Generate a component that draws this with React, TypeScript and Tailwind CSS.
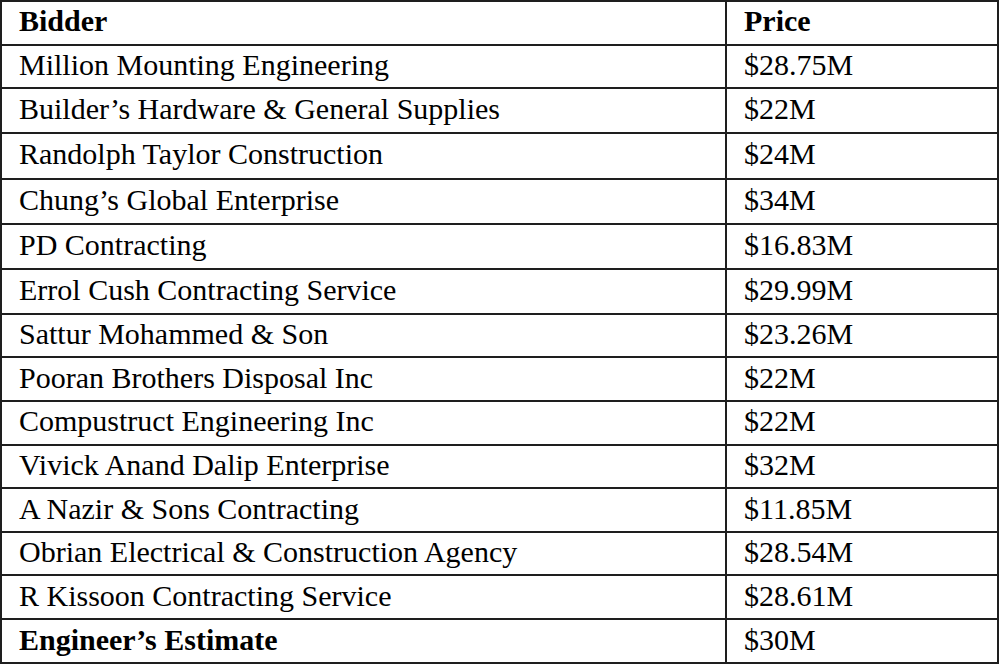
const rows: [string, string, string][] = [
  ["Million Mounting Engineering", "$28.75M", "h-[43.5px]"],
  ["Builder’s Hardware & General Supplies", "$22M", "h-[45.3px]"],
  ["Randolph Taylor Construction", "$24M", "h-[45.3px]"],
  ["Chung’s Global Enterprise", "$34M", "h-[45.3px]"],
  ["PD Contracting", "$16.83M", "h-[45.3px]"],
  ["Errol Cush Contracting Service", "$29.99M", "h-[45.3px]"],
  ["Sattur Mohammed & Son", "$23.26M", "h-[43px]"],
  ["Pooran Brothers Disposal Inc", "$22M", "h-[43.6px]"],
  ["Compustruct Engineering Inc", "$22M", "h-[43.6px]"],
  ["Vivick Anand Dalip Enterprise", "$32M", "h-[43.6px]"],
  ["A Nazir & Sons Contracting", "$11.85M", "h-[43.6px]"],
  ["Obrian Electrical & Construction Agency", "$28.54M", "h-[43.6px]"],
  ["R Kissoon Contracting Service", "$28.61M", "h-[43.6px]"],
];

const cell = "border-2 border-[#1e1e1e] pl-[17px] pb-[3px] leading-none align-middle";

export default function App() {
  return (
    <div className="w-[1000px] h-[666px] bg-white">
      <table
        className="w-[999px] border-collapse text-[30px] text-black table-fixed"
        style={{ fontFamily: '"Liberation Serif", "Times New Roman", serif' }}
      >
        <colgroup>
          <col className="w-[725px]" />
          <col />
        </colgroup>
        <thead>
          <tr className="h-[43.5px]">
            <th className={`${cell} text-left font-bold`}>Bidder</th>
            <th className={`${cell} text-left font-bold`}>Price</th>
          </tr>
        </thead>
        <tbody>
          {rows.map(([name, price, h]) => (
            <tr key={name} className={h}>
              <td className={cell}>{name}</td>
              <td className={cell}>{price}</td>
            </tr>
          ))}
          <tr className="h-[44px]">
            <td className={`${cell} font-bold`}>Engineer’s Estimate</td>
            <td className={cell}>$30M</td>
          </tr>
        </tbody>
      </table>
    </div>
  );
}
